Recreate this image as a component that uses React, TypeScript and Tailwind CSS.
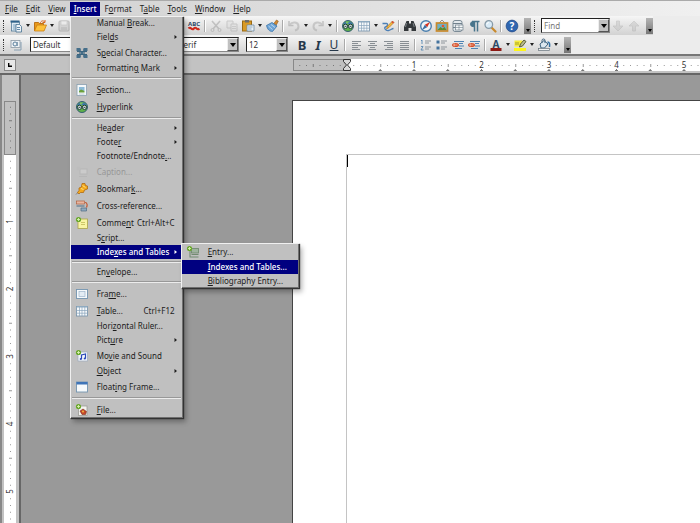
import { useState, type ReactNode } from "react";

type MenuEntry =
  | { kind: "separator" }
  | {
      kind?: "item";
      label: string;
      // index of the underlined access key
      accessAt?: number;
      icon?: ReactNode;
      shortcut?: string;
      arrow?: boolean;
      disabled?: boolean;
      active?: boolean;
      children?: MenuEntry[];
    };

function Icon({ children, faded }: { children: ReactNode; faded?: boolean }) {
  return (
    <svg viewBox="0 0 14 14" className={faded ? "size-[14px] shrink-0 opacity-40" : "size-[14px] shrink-0"} aria-hidden="true">
      {children}
    </svg>
  );
}

/* ---------- icons ---------- */

const plus = (
  <g>
    <circle cx="3.5" cy="3.5" r="2.6" fill="#6aa82c" />
    <path d="M3.5 2v3M2 3.5h3" stroke="#d5efb0" strokeWidth="0.9" />
  </g>
);

const icons = {
  newDoc: (
    <Icon>
      <rect x="2.5" y="3" width="8" height="9" fill="#dce9f2" stroke="#547c9a" strokeWidth="0.8" />
      <path d="M1.500 2.500h9" stroke="#2f628b" strokeWidth="2" />
      <path d="M4 6h4M4 8h3M4 10h3" stroke="#6f97b5" strokeWidth="0.9" />
      <path d="M7 5.500h3.500l2 2V13H7z" fill="#eef4f8" stroke="#44708f" strokeWidth="0.8" />
      <path d="M8 8.500h3M8 10.500h3" stroke="#3f6f94" strokeWidth="0.8" />
    </Icon>
  ),
  open: (
    <Icon>
      <path d="M1.500 12V3.500h4l1 1h4v2" fill="#e89a1c" stroke="#b76a0c" strokeWidth="0.9" />
      <path d="M1.500 12l2.500-6h9.500L11 12z" fill="#fdc13b" stroke="#cb7e12" strokeWidth="0.8" />
      <path d="M7 4.500c1-3 3-3 4.500-2M12 1v2.500H9.500" fill="none" stroke="#d8651d" />
    </Icon>
  ),
  save: (
    <Icon faded>
      <rect x="2" y="2" width="10" height="10" rx="1" fill="#bbb" stroke="#777" />
      <rect x="4" y="2" width="6" height="4" fill="#eee" stroke="#888" strokeWidth="0.6" />
      <rect x="4" y="8" width="6" height="4" fill="#999" />
    </Icon>
  ),
  spell: (
    <Icon>
      <text x="7" y="6.500" textAnchor="middle" fontSize="6" fontWeight="700" fill="#2f4a66">ABC</text>
      <path d="M1.500 9.500q1.300-1.600 2.700 0t2.700 0t2.700 0t2.700 0" fill="none" stroke="#cf2a1c" strokeWidth="2" />
    </Icon>
  ),
  cut: (
    <Icon faded>
      <path d="M3 2l7 8M11 2L4 10" stroke="#8a8a8a" strokeWidth="1.600" />
      <circle cx="3.500" cy="11" r="1.500" fill="none" stroke="#8a8a8a" />
      <circle cx="10.500" cy="11" r="1.500" fill="none" stroke="#8a8a8a" />
    </Icon>
  ),
  copy: (
    <Icon faded>
      <path d="M2 2h6v7H2z" fill="#ddd" stroke="#999" />
      <path d="M6 5h6v7H6z" fill="#ddd" stroke="#999" />
      <path d="M7 7.500h4M7 9.500h4" stroke="#999" strokeWidth="0.800" />
    </Icon>
  ),
  paste: (
    <Icon>
      <rect x="1.500" y="2" width="9" height="10" fill="#d99a25" stroke="#9a6a13" />
      <rect x="4" y="1" width="4" height="2.500" fill="#6d6d6d" />
      <path d="M6 6h7v6H6z" fill="#e9f0f5" stroke="#6d8ba3" strokeWidth="0.800" />
      <path d="M7 8h4.500M7 10h3.500" stroke="#7b9bb5" strokeWidth="0.800" />
    </Icon>
  ),
  brush: (
    <Icon>
      <path d="M8.500 5L11.500 1l1.800 1.200L11 6.500z" fill="#d08a34" stroke="#8f5a1b" strokeWidth="0.600" />
      <path d="M1.500 6.500L7 3.500l5 3.500-4.500 5.500c-3 0-5-2-6-6z" fill="#6ea5d8" stroke="#3a73a8" strokeWidth="0.800" />
      <path d="M3.500 7l4 3.500M6 5.500l4 3" stroke="#b9d7ef" strokeWidth="1" />
    </Icon>
  ),
  undo: (
    <Icon faded>
      <path d="M2 2v4.500h4.500" fill="none" stroke="#888" strokeWidth="1.500" />
      <path d="M2.500 6c3-4 9-3 9 1.500 0 2-1.500 3.500-3.500 4" fill="none" stroke="#999" strokeWidth="2" />
    </Icon>
  ),
  redo: (
    <Icon faded>
      <path d="M12 2v4.500H7.500" fill="none" stroke="#888" strokeWidth="1.500" />
      <path d="M11.500 6c-3-4-9-3-9 1.500 0 2 1.500 3.500 3.500 4" fill="none" stroke="#999" strokeWidth="2" />
    </Icon>
  ),
  globe: (
    <Icon>
      <circle cx="7" cy="7" r="5.500" fill="#5fb04a" stroke="#2a5470" strokeWidth="0.9" />
      <path d="M2 5C4 1.500 10 1.500 12 5z" fill="#3f78ad" />
      <path d="M5 2.500l3 0-1 2-2 0z" fill="#7cc35c" />
      <circle cx="4.500" cy="7.300" r="2.100" fill="#eef4f2" stroke="#1d3a3a" />
      <circle cx="9.500" cy="7.300" r="2.100" fill="#eef4f2" stroke="#1d3a3a" />
      <path d="M3.500 7.300h2M8.500 7.300h2" stroke="#1d3a3a" />
    </Icon>
  ),
  table: (
    <Icon>
      <rect x="1.500" y="2.500" width="11" height="9.500" fill="#f6f9fb" stroke="#7390a8" strokeWidth="0.800" />
      <rect x="1.500" y="2" width="11" height="1.500" fill="#8eaac0" />
      <path d="M1.500 6.500h11M1.500 9.200h11M4.500 3v9M7 3v9M9.800 3v9" stroke="#8aa5bb" strokeWidth="0.700" />
    </Icon>
  ),
  draw: (
    <Icon>
      <path d="M1.500 4.500h4c2 0 1 3-1 3.500s0 4 3 3.500 3-2 5-2" fill="none" stroke="#4c7fb5" strokeWidth="1.300" />
      <path d="M5.500 10l1-2.800L11.500 2 13 3.500 8 8.500z" fill="#f3b73c" stroke="#a86c18" strokeWidth="0.600" />
      <path d="M11 2.500L12.500 4" stroke="#d6453a" strokeWidth="1.500" />
    </Icon>
  ),
  binoculars: (
    <Icon>
      <path d="M3.500 2h2.500v2l1 1 1-1V2h2.500l2.500 6v4H8.500V9h-3v3H1V8z" fill="#34383b" />
      <path d="M3.500 4L2.500 8M10 4l1.200 4" stroke="#8d9599" strokeWidth="0.800" />
    </Icon>
  ),
  compass: (
    <Icon>
      <circle cx="7" cy="7" r="5.300" fill="#f0f5f9" stroke="#4b7fae" strokeWidth="1.400" />
      <path d="M11 3L8.200 8.200 5.800 5.800z" fill="#d8321f" />
      <path d="M3 11l2.800-5.200 2.400 2.400z" fill="#3c6ea3" />
    </Icon>
  ),
  gallery: (
    <Icon>
      <path d="M4 4l3-3 3 3" fill="none" stroke="#777" strokeWidth="0.800" />
      <rect x="1.500" y="4" width="11" height="8" fill="#6fb0c4" stroke="#c98a2c" strokeWidth="1.700" />
      <path d="M2.500 11l3-3 2 1.500 2-1.500 2 3z" fill="#5d8b2a" />
      <circle cx="8" cy="7" r="1.300" fill="#e8542c" />
    </Icon>
  ),
  database: (
    <Icon>
      <rect x="2" y="1.500" width="9" height="11" rx="2" fill="#e2e8ec" stroke="#71818d" strokeWidth="0.9" />
      <path d="M2 4.500h9M2 8.500h9" stroke="#71818d" />
      <rect x="4.500" y="6" width="7.500" height="5" fill="#f5f7f8" stroke="#71818d" strokeWidth="0.700" />
      <path d="M4.500 8.500H12M8 6v5" stroke="#71818d" strokeWidth="0.600" />
    </Icon>
  ),
  marks: (
    <Icon>
      <path d="M6.500 2.500a3 2.600 0 0 0 0 5.200z" fill="#48758c" stroke="#48758c" />
      <path d="M5 2.500h7.500M7.500 2v10.500M10.500 2v10.500" fill="none" stroke="#48758c" strokeWidth="1.500" />
    </Icon>
  ),
  magnifier: (
    <Icon>
      <path d="M8.500 8.500l4 4" stroke="#c98a2c" strokeWidth="2.200" strokeLinecap="round" />
      <circle cx="5.800" cy="5.500" r="3.800" fill="#d9ebf7" stroke="#879aa7" strokeWidth="1.300" />
      <path d="M3.800 5.500a2 2 0 0 1 2-2" fill="none" stroke="#fff" />
    </Icon>
  ),
  help: (
    <Icon>
      <circle cx="7" cy="7" r="5.900" fill="#2f66b0" stroke="#1d4585" strokeWidth="0.700" />
      <text x="7" y="10.500" textAnchor="middle" fontSize="10" fontWeight="700" fill="#fff">?</text>
    </Icon>
  ),
  styles: (
    <Icon>
      <rect x="2" y="2.500" width="9" height="7" fill="#eef2f5" stroke="#8c9aa5" strokeWidth="0.800" />
      <circle cx="6" cy="6" r="2" fill="none" stroke="#5b7f9c" />
      <path d="M8.500 4v4M12 4v8H5" fill="none" stroke="#7f9aaf" strokeWidth="0.900" />
    </Icon>
  ),
  numbered: (
    <Icon>
      <path d="M3 2v4M2 3l1-1M2 8.500h2L2 12h2.500" fill="none" stroke="#5888b2" strokeWidth="0.900" />
      <path d="M6 3h6M6 5h4M6 9h6M6 11h4" stroke="#8e959b" />
    </Icon>
  ),
  bullets: (
    <Icon>
      <rect x="1.500" y="2.500" width="3" height="3" fill="#44739d" />
      <rect x="1.500" y="8.500" width="3" height="3" fill="#44739d" />
      <path d="M6 3h6M6 5h4M6 9h6M6 11h4" stroke="#8e959b" />
    </Icon>
  ),
  indent: (
    <Icon>
      <path d="M3 3.500h10M8 5.500h4M8 8h5M4 10.500h7" stroke="#4f83b3" strokeWidth="1.100" />
      <ellipse cx="4.500" cy="7" rx="3.500" ry="2" fill="#d5502c" />
      <path d="M2.500 7h4M4 5.800L2.500 7 4 8.200" fill="none" stroke="#f6c8b4" strokeWidth="0.700" />
    </Icon>
  ),
  fontColor: (
    <Icon>
      <rect x="1.500" y="10" width="11" height="3" fill="#8e1b16" />
      <text x="7" y="10" textAnchor="middle" fontSize="10" fontWeight="700" fill="#2b4a68">A</text>
    </Icon>
  ),
  highlight: (
    <Icon>
      <rect x="1" y="10" width="12" height="3" fill="#fdf61a" />
      <rect x="1.500" y="2.500" width="8" height="6" fill="#f6ec3c" />
      <path d="M3 4v3M5 4v3" stroke="#8f8a2a" strokeWidth="0.800" />
      <path d="M6.500 9l1-3 3.500-4 2 1.500-3.500 4.500z" fill="#b9bb8c" stroke="#4f5230" strokeWidth="0.900" />
    </Icon>
  ),
  background: (
    <Icon>
      <path d="M3 6l4-3.500 4 3.500-3.500 4H4z" fill="#dce7ef" stroke="#3f637f" />
      <path d="M5 5V2.500a1.500 1.500 0 0 1 3 0V5" fill="none" stroke="#3f637f" />
      <path d="M10.500 4c2 0 2.500 2 2 5" fill="none" stroke="#3472a6" strokeWidth="1.500" />
      <rect x="1.500" y="10.500" width="11" height="2" fill="#f2f2f2" stroke="#66737c" strokeWidth="0.700" />
    </Icon>
  ),
  special: (
    <Icon>
      <path d="M2 5.500h10M2 8.500h10M5 3v8M9 3v8" stroke="#3c657f" strokeWidth="1.200" />
      <path d="M1.500 2h4v3h-4zM8.500 2h4v3h-4zM1.500 9h4v3h-4zM8.500 9h4v3h-4z" fill="#466f8a" />
      <path d="M6 6h2v2H6z" fill="#466f8a" />
    </Icon>
  ),
  section: (
    <Icon>
      <rect x="2" y="1.500" width="9.500" height="11" fill="#f4f8fa" stroke="#8aa0b0" strokeWidth="0.800" />
      <path d="M4 4h5.500v4H4z" fill="#8dbbd8" />
      <path d="M4 8l2-1.500L9.500 8v1.500H4z" fill="#6ba03b" />
      <path d="M4 11h5.500" stroke="#b6c5d0" strokeWidth="0.800" />
    </Icon>
  ),
  caption: (
    <Icon faded>
      <rect x="5" y="4" width="7" height="5" fill="#ddd" stroke="#aaa" />
      <path d="M4 11.500h8" stroke="#aaa" />
      <circle cx="3.500" cy="3.500" r="2" fill="#bbb" />
    </Icon>
  ),
  bookmark: (
    <Icon>
      <path d="M1 12.500l4-4" stroke="#6b6b6b" strokeWidth="0.800" />
      <path d="M7 1.500h3l.5 2 2 .5v3l-3 1-1 2.500H5.500L4 12 2.500 10.500l1.500-2V6l2.500-1z" fill="#f3a81d" stroke="#a96208" strokeWidth="0.700" />
      <path d="M7.500 3.500l3 2M6 6.500l2.500 1" stroke="#fde07e" />
    </Icon>
  ),
  crossRef: (
    <Icon>
      <rect x="1.500" y="2" width="8" height="3" fill="#e8b6a0" stroke="#b0603f" strokeWidth="0.700" />
      <path d="M1.500 7h8" stroke="#72889a" strokeWidth="1.500" />
      <path d="M10 3.500c2.500 0 2.500 3 1.500 5" fill="none" stroke="#c4542e" strokeWidth="1.200" />
      <path d="M6 9h5.500v3H6z" fill="#8fa9bf" stroke="#4f6b82" strokeWidth="0.700" />
    </Icon>
  ),
  comment: (
    <Icon>
      <rect x="3" y="3" width="9.500" height="9.500" fill="#f8f5a3" stroke="#aaa349" strokeWidth="0.800" />
      <path d="M6 6.500h4M6 8.500h4" stroke="#c2bc59" strokeWidth="0.800" />
      {plus}
    </Icon>
  ),
  frame: (
    <Icon>
      <rect x="1.500" y="2.500" width="11" height="9" fill="#f6f9fb" stroke="#7394b0" strokeWidth="0.900" />
      <rect x="4" y="4.500" width="6" height="5" fill="#e3ecf4" stroke="#9db6ca" strokeWidth="0.700" />
    </Icon>
  ),
  movie: (
    <Icon>
      <rect x="3" y="3" width="9.500" height="9" fill="#f3f6fb" stroke="#9aaabd" strokeWidth="0.700" />
      <path d="M6.500 10V6l4-1v4.500" fill="none" stroke="#2b49b8" strokeWidth="1.200" />
      <circle cx="5.800" cy="10" r="1.100" fill="#2b49b8" />
      <circle cx="9.800" cy="9.500" r="1.100" fill="#2b49b8" />
      {plus}
    </Icon>
  ),
  floating: (
    <Icon>
      <rect x="1.500" y="2" width="11" height="10" fill="#f6f9fb" stroke="#7394b0" strokeWidth="0.900" />
      <rect x="1.500" y="2" width="11" height="2.500" fill="#3e74b8" />
    </Icon>
  ),
  file: (
    <Icon>
      <rect x="3.500" y="3" width="8.500" height="9.500" fill="#f3f3f0" stroke="#9b9b94" strokeWidth="0.800" />
      <path d="M5 8l3-2 3.500 2.500-1 3H7z" fill="#c5482a" stroke="#7c2c19" strokeWidth="0.600" />
      <circle cx="8" cy="8.500" r="1" fill="#f0b840" />
      {plus}
    </Icon>
  ),
  entry: (
    <Icon>
      <rect x="5.500" y="3.500" width="7" height="4.500" fill="#9eb39e" stroke="#6b866b" strokeWidth="0.800" />
      <path d="M4 6v6h8.500M5.500 9.500h7" fill="none" stroke="#718a71" strokeWidth="1.100" />
      {plus}
    </Icon>
  ),
  arrowDown: (
    <Icon faded>
      <path d="M5.500 2h3v5H12l-5 5-5-5h3.500z" fill="#bbb" stroke="#999" strokeWidth="0.700" />
    </Icon>
  ),
  arrowUp: (
    <Icon faded>
      <path d="M5.500 12h3V7H12L7 2 2 7h3.500z" fill="#bbb" stroke="#999" strokeWidth="0.700" />
    </Icon>
  ),
};

function AlignIcon({ lines }: { lines: string }) {
  return (
    <Icon>
      <path d={lines} stroke="#888e93" strokeWidth="1" />
    </Icon>
  );
}

/* ---------- data ---------- */

const insertMenu: MenuEntry[] = [
  { label: "Manual Break...", accessAt: 7 },
  { label: "Fields", accessAt: 4, arrow: true },
  { label: "Special Character...", accessAt: 1, icon: icons.special },
  { label: "Formatting Mark", accessAt: 9, arrow: true },
  { kind: "separator" },
  { label: "Section...", accessAt: 0, icon: icons.section },
  { label: "Hyperlink", accessAt: 0, icon: icons.globe },
  { kind: "separator" },
  { label: "Header", accessAt: 2, arrow: true },
  { label: "Footer", accessAt: 5, arrow: true },
  { label: "Footnote/Endnote...", accessAt: 16 },
  { label: "Caption...", icon: icons.caption, disabled: true },
  { label: "Bookmark...", accessAt: 7, icon: icons.bookmark },
  { label: "Cross-reference...", icon: icons.crossRef },
  { label: "Comment", accessAt: 5, icon: icons.comment, shortcut: "Ctrl+Alt+C" },
  { label: "Script...", accessAt: 1 },
  {
    label: "Indexes and Tables",
    accessAt: 4,
    arrow: true,
    active: true,
    children: [
      { label: "Entry...", accessAt: 0, icon: icons.entry },
      { label: "Indexes and Tables...", accessAt: 0, active: true },
      { label: "Bibliography Entry...", accessAt: 0 },
    ],
  },
  { kind: "separator" },
  { label: "Envelope...", accessAt: 2 },
  { kind: "separator" },
  { label: "Frame...", accessAt: 3, icon: icons.frame },
  { label: "Table...", accessAt: 0, icon: icons.table, shortcut: "Ctrl+F12" },
  { label: "Horizontal Ruler...", accessAt: 4 },
  { label: "Picture", accessAt: 4, arrow: true },
  { label: "Movie and Sound", accessAt: 2, icon: icons.movie },
  { label: "Object", accessAt: 0, arrow: true },
  { label: "Floating Frame...", accessAt: 5, icon: icons.floating },
  { kind: "separator" },
  { label: "File...", accessAt: 0, icon: icons.file },
];

const menuTitles = [
  { label: "File", accessAt: 0 },
  { label: "Edit", accessAt: 0 },
  { label: "View", accessAt: 0 },
  { label: "Insert", accessAt: 0 },
  { label: "Format", accessAt: 1 },
  { label: "Table", accessAt: 1 },
  { label: "Tools", accessAt: 0 },
  { label: "Window", accessAt: 0 },
  { label: "Help", accessAt: 0 },
];

/* ---------- menus ---------- */

function Label({ text, at }: { text: string; at?: number }) {
  if (at === undefined) return <>{text}</>;
  return (
    <>
      {text.slice(0, at)}
      <span className="underline underline-offset-1">{text[at]}</span>
      {text.slice(at + 1)}
    </>
  );
}

function Menu({ entries, name }: { entries: MenuEntry[]; name: string }) {
  return (
    <ul
      role="menu"
      aria-label={name}
      className="bg-[#c0c0c0] px-px text-[#1c1c1c] shadow-[inset_1px_1px_0_#f0f0f0,inset_-1px_-1px_0_#707070,1px_1px_1px_#333,3px_4px_5px_rgba(0,0,0,0.3)]"
    >
      {entries.map((entry, i) => {
        if (entry.kind === "separator") {
          return (
            <li key={i} role="separator" className="flex h-[6px] items-center px-px">
              <span className="h-[2px] w-full border-t border-[#989898] bg-[#ececec]" />
            </li>
          );
        }
        return (
          <li key={i} role="none" className="relative">
            <button
              type="button"
              role="menuitem"
              disabled={entry.disabled}
              className={[
                "flex w-full items-center whitespace-nowrap pr-1 text-left leading-[14px]",
                entry.icon ? "h-[17px]" : "h-[14px]",
                entry.active ? "bg-[#000080] font-medium text-white" : "",
                entry.disabled ? "text-[#979797]" : "",
              ].join(" ")}
            >
              <span className="flex w-[26px] shrink-0 justify-center pr-1">{entry.icon}</span>
              <span className="grow">
                <Label text={entry.label} at={entry.accessAt} />
              </span>
              {entry.shortcut && <span className="pr-[3px]">{entry.shortcut}</span>}
              {entry.arrow && (
                <svg viewBox="0 0 4 4" className="size-1" aria-hidden="true">
                  <path d="M0.500 0l2.500 2-2.500 2z" fill="currentColor" />
                </svg>
              )}
            </button>
            {entry.children && (
              <div className="absolute -top-[2px] left-full z-20 -ml-px w-[118px]">
                <Menu entries={entry.children} name={entry.label} />
              </div>
            )}
          </li>
        );
      })}
    </ul>
  );
}

/* ---------- toolbar parts ---------- */

function Tool({ label, children }: { label: string; children: ReactNode }) {
  return (
    <button type="button" aria-label={label} className="flex size-4 shrink-0 items-center justify-center">
      {children}
    </button>
  );
}

function Caret({ label }: { label: string }) {
  return (
    <button type="button" aria-label={label} className="flex h-4 w-2 shrink-0 items-center justify-center">
      <svg viewBox="0 0 4 3" className="h-[3px] w-1" aria-hidden="true">
        <path d="M0 0h4L2 3z" fill="#222" />
      </svg>
    </button>
  );
}

const Divider = () => <span className="mx-[2px] h-3 w-[2px] shrink-0 border-l border-[#aaa] bg-white" />;
const Grip = () => <span className="ml-[3px] mr-1 h-3 w-px shrink-0 border-l border-dotted border-[#333]" />;

function Overflow() {
  return (
    <button type="button" aria-label="Toolbar options" className="ml-1 flex h-4 w-[7px] shrink-0 items-end justify-center bg-linear-to-b from-[#b5b5b5] to-[#777] pb-[2px]">
      <svg viewBox="0 0 4 3" className="h-[3px] w-1" aria-hidden="true">
        <path d="M0 0h4L2 3z" fill="#000" />
      </svg>
    </button>
  );
}

function ComboArrow() {
  return (
    <span className="pointer-events-none absolute inset-y-px right-px flex w-[11px] items-center justify-center border border-t-[#eee] border-r-[#555] border-b-[#555] border-l-[#eee] bg-[#c0c0c0]">
      <svg viewBox="0 0 6 4" className="h-1 w-[6px]" aria-hidden="true">
        <path d="M0 0h6L3 4z" fill="#000" />
      </svg>
    </span>
  );
}

const fieldClass =
  "h-[15px] w-full appearance-none border border-t-[#222] border-r-[#888] border-b-[#888] border-l-[#222] bg-white leading-[13px] text-[#333] outline-none";

function Combo({ label, value, width }: { label: string; value: string; width: string }) {
  return (
    <div className={`relative flex shrink-0 ${width}`}>
      <select aria-label={label} className={`${fieldClass} pl-[2px]`} defaultValue={value}>
        <option>{value}</option>
      </select>
      <ComboArrow />
    </div>
  );
}

/* ---------- rulers ---------- */

// a tenth of an inch on screen
const TENTH = 6.75;
const marginMarks = [1, 2, 3, 4, 5, 6, 7];
const textMarks = Array.from({ length: 59 }, (_, i) => i + 1);

function HorizontalRuler() {
  return (
    <svg className="h-3 w-full" aria-hidden="true">
      <rect width="100%" height="12" fill="#fff" />
      <rect x="0.5" y="0.5" width="54" height="11" fill="#c0c0c0" stroke="#888" />
      {marginMarks.map((n) => (
        <rect key={n} x={53.5 - n * TENTH} y={n === 5 ? 5 : 6} width="1" height={n === 5 ? 3 : 1} fill="#777" />
      ))}
      {textMarks.map((n) => {
        const x = 53.5 + n * TENTH;
        return (
          <g key={n}>
            {n % 10 === 0 ? (
              <text x={x} y="9" textAnchor="middle" fontSize="8" fill="#333">{n / 10}</text>
            ) : (
              <rect x={x} y={n % 5 ? 6 : 5} width="1" height={n % 5 ? 1 : 3} fill="#999" />
            )}
            {n % 5 === 0 && <path d={`M${x - 1.5} 12h3v-1h-1v-1h-1v1h-1z`} fill="#777" />}
          </g>
        );
      })}
      <path d="M50.500 0.500h7v2l-3 3.500 3 3.500v2h-7v-2l3-3.500-3-3.500z" fill="#d8d8d8" stroke="#333" />
    </svg>
  );
}

function VerticalRuler() {
  return (
    <svg className="h-full w-3" aria-hidden="true">
      <rect width="12" height="100%" fill="#fff" />
      <rect x="0.5" y="0.5" width="11" height="53" fill="#c0c0c0" stroke="#888" />
      {marginMarks.map((n) => (
        <rect key={n} x={n === 5 ? 5 : 6} y={53 - n * TENTH} width={n === 5 ? 3 : 1} height="1" fill="#777" />
      ))}
      {textMarks.map((n) => {
        const y = 53 + n * TENTH;
        if (n % 10 === 0) {
          return (
            <text key={n} transform={`translate(9 ${y}) rotate(-90)`} textAnchor="middle" fontSize="8" fill="#333">
              {n / 10}
            </text>
          );
        }
        return <rect key={n} x={n % 5 ? 6 : 5} y={y} width={n % 5 ? 1 : 3} height="1" fill="#999" />;
      })}
    </svg>
  );
}

/* ---------- page ---------- */

export default function App() {
  const [open, setOpen] = useState("Insert");

  return (
    <div className="flex h-screen flex-col overflow-hidden bg-[#999] font-['Noto_Sans','Open_Sans',sans-serif] text-[8px] leading-[14px] text-[#222]">
      <nav className="flex h-4 shrink-0 items-end border-t border-[#aaa] bg-linear-to-r from-[#d0d0d0] to-[#f0f0f0] pl-px">
        {menuTitles.map(({ label, accessAt }) => (
          <div key={label} className="relative">
            <button
              type="button"
              aria-expanded={open === label}
              onClick={() => setOpen(open === label ? "" : label)}
              className={open === label ? "block h-[14px] bg-[#000080] px-1 font-medium text-white" : "block h-[14px] px-1"}
            >
              <Label text={label} at={accessAt} />
            </button>
            {label === "Insert" && open === label && (
              <div className="absolute top-full left-0 z-10 w-[113px]">
                <Menu entries={insertMenu} name="Insert" />
              </div>
            )}
          </div>
        ))}
      </nav>

      <div className="flex shrink-0 flex-col items-start bg-[#ececec]">
        {/* Standard toolbar */}
        <div role="toolbar" aria-label="Standard" className="flex h-[19px] items-center bg-linear-to-b from-[#f6f6f6] to-[#d2d2d2]">
          <Grip />
          <Tool label="New">{icons.newDoc}</Tool>
          <Caret label="New options" />
          <Tool label="Open">{icons.open}</Tool>
          <Caret label="Open options" />
          <Tool label="Save">{icons.save}</Tool>
          <Tool label="E-mail">{icons.section}</Tool>
          <Divider />
          <Tool label="Edit file">{icons.draw}</Tool>
          <Divider />
          <Tool label="Export as PDF">{icons.file}</Tool>
          <Tool label="Print">{icons.database}</Tool>
          <Tool label="Page preview">{icons.magnifier}</Tool>
          <Divider />
          <Tool label="Spelling">{icons.marks}</Tool>
          <Tool label="Auto spellcheck">{icons.spell}</Tool>
          <Divider />
          <Tool label="Cut">{icons.cut}</Tool>
          <Tool label="Copy">{icons.copy}</Tool>
          <Tool label="Paste">{icons.paste}</Tool>
          <Caret label="Paste options" />
          <Tool label="Format paintbrush">{icons.brush}</Tool>
          <Divider />
          <Tool label="Undo">{icons.undo}</Tool>
          <Caret label="Undo history" />
          <Tool label="Redo">{icons.redo}</Tool>
          <Caret label="Redo history" />
          <Divider />
          <Tool label="Hyperlink">{icons.globe}</Tool>
          <Tool label="Table">{icons.table}</Tool>
          <Caret label="Table options" />
          <Tool label="Show draw functions">{icons.draw}</Tool>
          <Divider />
          <Tool label="Find and replace">{icons.binoculars}</Tool>
          <Tool label="Navigator">{icons.compass}</Tool>
          <Tool label="Gallery">{icons.gallery}</Tool>
          <Tool label="Data sources">{icons.database}</Tool>
          <Tool label="Nonprinting characters">{icons.marks}</Tool>
          <Tool label="Zoom">{icons.magnifier}</Tool>
          <Divider />
          <Tool label="Help">{icons.help}</Tool>
          <Overflow />
          <Grip />
          <div className="relative ml-[2px] flex w-[69px] shrink-0">
            <input type="text" aria-label="Find" placeholder="Find" className={`${fieldClass} pl-[2px] placeholder:text-[#777]`} />
            <ComboArrow />
          </div>
          <Tool label="Find next">{icons.arrowDown}</Tool>
          <Tool label="Find previous">{icons.arrowUp}</Tool>
          <Overflow />
        </div>

        {/* Formatting toolbar */}
        <div role="toolbar" aria-label="Formatting" className="flex h-[19px] items-center bg-linear-to-b from-[#f6f6f6] to-[#d2d2d2]">
          <Grip />
          <Tool label="Styles and formatting">{icons.styles}</Tool>
          <div className="flex gap-[7px] px-[6px]">
            <Combo label="Paragraph style" value="Default" width="w-[99px]" />
            <Combo label="Font name" value="Liberation Serif" width="w-[103px]" />
            <Combo label="Font size" value="12" width="w-[42px]" />
          </div>
          <Tool label="Bold"><span className="text-[13px] font-bold text-[#26384a]">B</span></Tool>
          <Tool label="Italic"><span className="text-[13px] font-bold italic text-[#26384a]">I</span></Tool>
          <Tool label="Underline"><span className="text-[12px] text-[#26384a] underline">U</span></Tool>
          <Divider />
          <Tool label="Align left"><AlignIcon lines="M3 3.500h9M3 5.500h6M3 7.500h9M3 9.500h6M3 11.500h8" /></Tool>
          <Tool label="Center"><AlignIcon lines="M3 3.500h9M5 5.500h5M3 7.500h9M5 9.500h5M4 11.500h7" /></Tool>
          <Tool label="Align right"><AlignIcon lines="M3 3.500h9M6 5.500h6M3 7.500h9M6 9.500h6M4 11.500h8" /></Tool>
          <Tool label="Justify"><AlignIcon lines="M3 3.500h9M3 5.500h9M3 7.500h9M3 9.500h9M3 11.500h9" /></Tool>
          <Divider />
          <Tool label="Numbering">{icons.numbered}</Tool>
          <Tool label="Bullets">{icons.bullets}</Tool>
          <Tool label="Decrease indent">{icons.indent}</Tool>
          <Tool label="Increase indent">{icons.indent}</Tool>
          <Divider />
          <Tool label="Font color">{icons.fontColor}</Tool>
          <Caret label="Font color options" />
          <Tool label="Highlighting">{icons.highlight}</Tool>
          <Caret label="Highlighting options" />
          <Tool label="Background color">{icons.background}</Tool>
          <Caret label="Background color options" />
          <Overflow />
        </div>
      </div>

      {/* Horizontal ruler */}
      <div className="flex h-[21px] shrink-0 items-center border-t-2 border-b-2 border-t-[#777] border-b-[#666] bg-[#c2c2c2] pl-1">
        <button type="button" aria-label="Tab stop" className="flex size-3 shrink-0 items-center justify-center border border-[#888] bg-[#e8e8e8]">
          <svg viewBox="0 0 4 4" className="size-1" aria-hidden="true">
            <path d="M0.700 0v3.300H4" fill="none" stroke="#000" strokeWidth="1.400" />
          </svg>
        </button>
        <div className="ml-[277px] flex grow">
          <HorizontalRuler />
        </div>
      </div>

      {/* Document area */}
      <div className="flex min-h-0 grow">
        <div className="flex w-[21px] shrink-0 border-r-2 border-l-2 border-r-[#666] border-l-[#888] bg-[#c2c2c2] pt-[26px] pl-[2px]">
          <VerticalRuler />
        </div>
        <main className="flex grow pt-[25px] pl-[271px]">
          <div className="grow border-t border-l border-[#444] bg-white pt-[53px] pl-[53px]">
            <div className="h-full border-t border-l border-[#c4c4c4]">
              <div className="h-3 w-px bg-black" />
            </div>
          </div>
        </main>
      </div>
    </div>
  );
}
